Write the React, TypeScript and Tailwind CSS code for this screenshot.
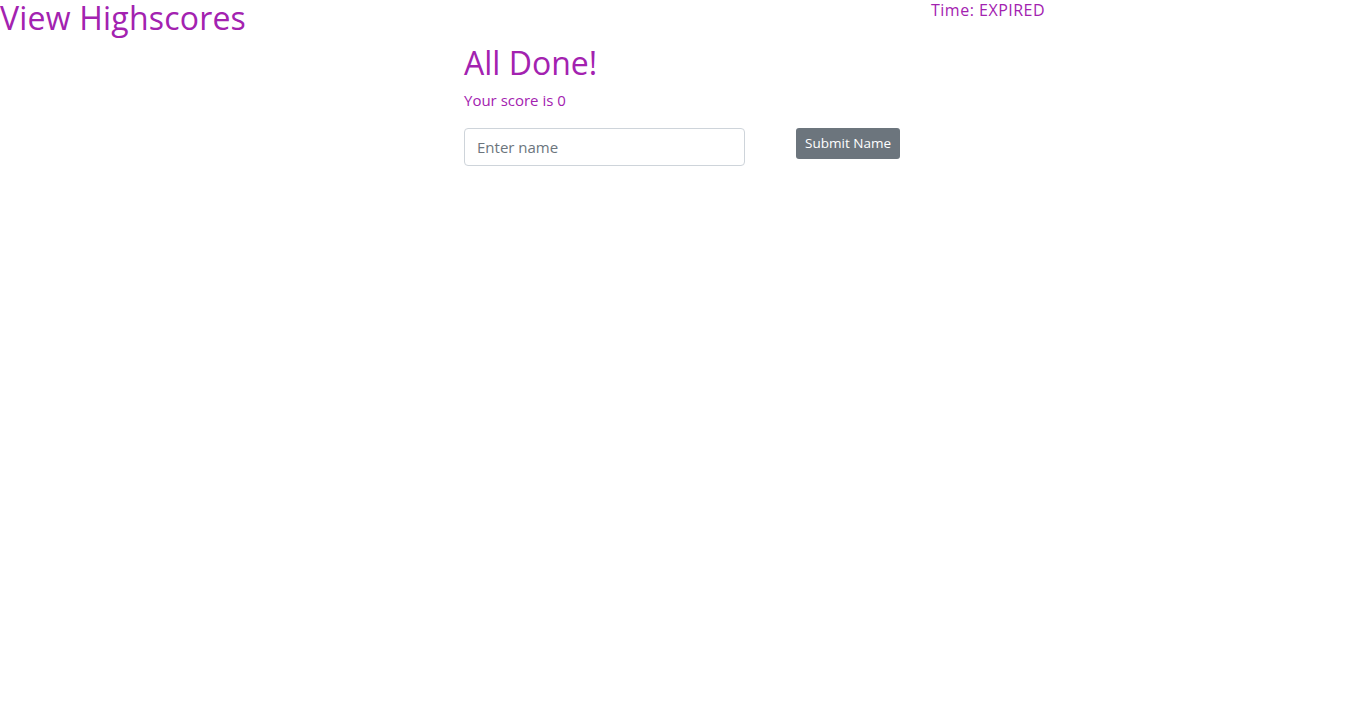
export default function App() {
  const comic = { fontFamily: '"Comic Sans MS", "Open Sans", sans-serif' };
  return (
    <div className="min-h-[728px] bg-white" style={{ fontFamily: '"Segoe UI", "Open Sans", sans-serif' }}>
      <div className="flex items-start">
        <a className="w-[464px] text-[32px] leading-[36px] text-[#a322b0] tracking-[0.2px]" style={comic}>View Highscores</a>
        <div className="w-[467px]" />
        <div className="text-[16px] leading-[20px] text-[#a322b0] tracking-[0.5px]" style={comic}>Time: EXPIRED</div>
      </div>
      <div className="ml-[464px] mt-[8px] w-[436px]">
        <h2 className="text-[32px] leading-[38px] font-medium text-[#a322b0]">All Done!</h2>
        <p className="mt-[6px] text-[15px] leading-[24px] text-[#a322b0]">Your score is 0</p>
        <div className="mt-[16px] flex items-start justify-between">
          <input
            placeholder="Enter name"
            className="h-[38px] w-[281px] rounded-[4px] border border-[#ced4da] px-[12px] text-[15px] text-[#495057] placeholder:text-[#6c757d] outline-none"
          />
          <button className="h-[31px] rounded-[3px] bg-[#6c757d] px-[9px] text-[13.5px] text-white">Submit Name</button>
        </div>
      </div>
    </div>
  );
}
